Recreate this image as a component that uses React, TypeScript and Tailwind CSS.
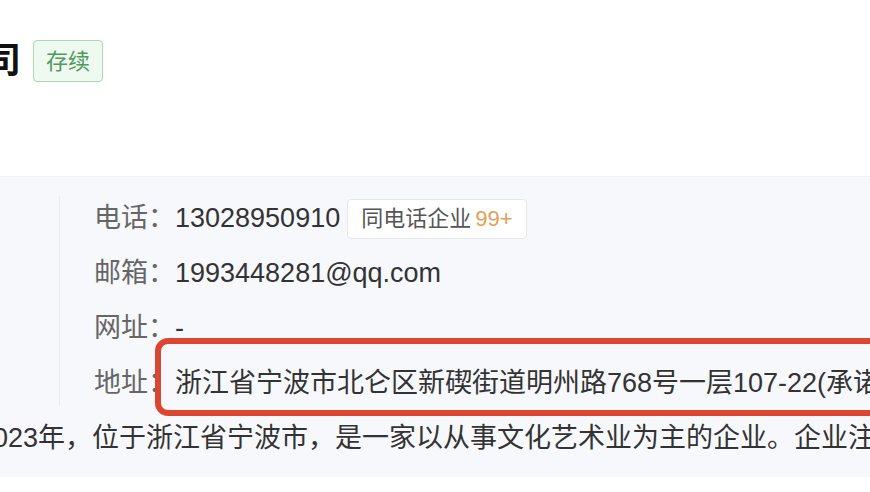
const font = {
  fontFamily: '"Liberation Sans", "Noto Sans CJK SC", sans-serif',
};

const rows = [
  { label: "电话", value: "13028950910", tag: true },
  { label: "邮箱", value: "1993448281@qq.com" },
  { label: "网址", value: "-" },
  { label: "地址", value: "浙江省宁波市北仑区新碶街道明州路768号一层107-22(承诺申报)", mark: true },
];

export default function App() {
  return (
    <div className="w-[870px] h-[492px] overflow-hidden bg-white" style={font}>
      {/* header */}
      <div className="h-[176px] pt-[40px]">
        <div className="flex items-center gap-x-[12px]">
          <span className="-ml-[15px] text-[36px] leading-[42px] font-bold text-[#111]">司</span>
          <span className="h-[42px] px-[12px] flex items-center rounded-[4px] border border-[#a9d8b2] bg-[#eef9f0] text-[22px] text-[#4f9a5d]">
            存续
          </span>
        </div>
      </div>

      {/* info panel */}
      <div className="bg-[#f7f8fc] border-t border-[#f0f1f5] pt-[14px] pb-[11px]">
        <div className="flex">
          <div className="w-[60px] shrink-0 border-r border-[#e9ebf0] my-[5px]" />
          <div className="flex flex-col pl-[34px]">
            {rows.map((r) => (
              <div key={r.label} className="relative h-[55px] flex items-center whitespace-nowrap text-[27px]">
                <span className="text-[#666]">{r.label}：</span>
                <span className="text-[#333]">{r.value}</span>
                {r.tag && (
                  <span className="ml-[7px] h-[40px] px-[13px] flex items-center rounded-[4px] border border-[#e6e7eb] bg-white text-[22px] text-[#555]">
                    同电话企业
                    <span className="ml-[4px] text-[#e2a154]">99+</span>
                  </span>
                )}
                {r.mark && (
                  <div className="absolute left-[61px] top-[-18px] w-[800px] h-[78px] rounded-[13px] border-[6px] border-[#dc4530]" />
                )}
              </div>
            ))}
          </div>
        </div>
        <p className="h-[55px] flex items-center whitespace-nowrap -ml-[22px] text-[27px] text-[#333]">
          2023年，位于浙江省宁波市，是一家以从事文化艺术业为主的企业。企业注册资本
        </p>
      </div>
    </div>
  );
}
